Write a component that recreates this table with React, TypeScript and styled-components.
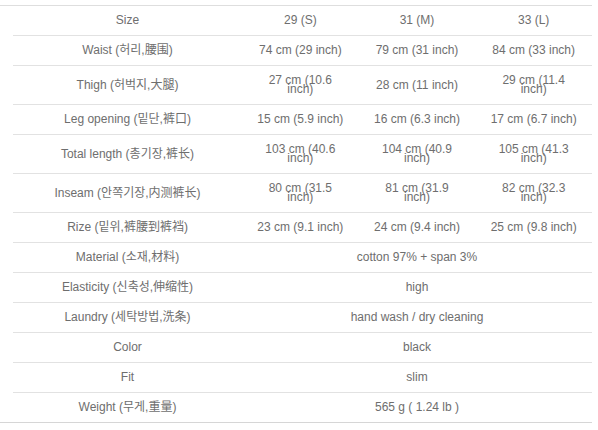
import React from "react";
import styled, { createGlobalStyle } from "styled-components";

const Global = createGlobalStyle`
  html, body { margin: 0; padding: 0; background: #fff; }
  body { font-family: "Liberation Sans", "Noto Sans CJK KR", sans-serif; }
`;

const Page = styled.div`
  width: 598px;
  padding-top: 5px;
  box-sizing: border-box;
`;

const Table = styled.div`
  width: 592px;
  border-top: 1px solid #dedede;
  border-bottom: 1px solid #d6d6d6;
  display: flex;
  flex-direction: column;
`;

const Row = styled.div<{ $last?: boolean }>`
  margin-left: 13px;
  display: grid;
  grid-template-columns: 229px repeat(3, 1fr);
  border-bottom: ${(p) => (p.$last ? "none" : "1px solid #e2e2e2")};
`;

const Cell = styled.div<{ $span?: number }>`
  grid-column: span ${(p) => p.$span ?? 1};
  display: flex;
  align-items: center;
  justify-content: center;
  text-align: center;
  padding: 10px 14px;
  min-height: 9px;
  font-size: 12px;
  line-height: 9px;
  color: #6e6e6e;
  white-space: normal;
`;

const Text = styled.span`
  display: block;
`;

type RowData = { label: string; values: string[] };

const rows: RowData[] = [
  { label: "Size", values: ["29 (S)", "31 (M)", "33 (L)"] },
  { label: "Waist (허리,腰围)", values: ["74 cm (29 inch)", "79 cm (31 inch)", "84 cm (33 inch)"] },
  { label: "Thigh (허벅지,大腿)", values: ["27 cm (10.6 inch)", "28 cm (11 inch)", "29 cm (11.4 inch)"] },
  { label: "Leg opening (밑단,裤口)", values: ["15 cm (5.9 inch)", "16 cm (6.3 inch)", "17 cm (6.7 inch)"] },
  { label: "Total length (총기장,裤长)", values: ["103 cm (40.6 inch)", "104 cm (40.9 inch)", "105 cm (41.3 inch)"] },
  { label: "Inseam (안쪽기장,内测裤长)", values: ["80 cm (31.5 inch)", "81 cm (31.9 inch)", "82 cm (32.3 inch)"] },
  { label: "Rize (밑위,裤腰到裤裆)", values: ["23 cm (9.1 inch)", "24 cm (9.4 inch)", "25 cm (9.8 inch)"] },
  { label: "Material (소재,材料)", values: ["cotton 97% + span 3%"] },
  { label: "Elasticity (신축성,伸缩性)", values: ["high"] },
  { label: "Laundry (세탁방법,洗条)", values: ["hand wash / dry cleaning"] },
  { label: "Color", values: ["black"] },
  { label: "Fit", values: ["slim"] },
  { label: "Weight (무게,重量)", values: ["565 g ( 1.24 lb )"] },
];

export default function App() {
  return (
    <>
      <Global />
      <Page>
        <Table>
          {rows.map((r, i) => (
            <Row key={r.label} $last={i === rows.length - 1}>
              <Cell>
                <Text>{r.label}</Text>
              </Cell>
              {r.values.length === 1 ? (
                <Cell $span={3}>
                  <Text>{r.values[0]}</Text>
                </Cell>
              ) : (
                r.values.map((v, j) => (
                  <Cell key={j}>
                    <Text>{v}</Text>
                  </Cell>
                ))
              )}
            </Row>
          ))}
        </Table>
      </Page>
    </>
  );
}
